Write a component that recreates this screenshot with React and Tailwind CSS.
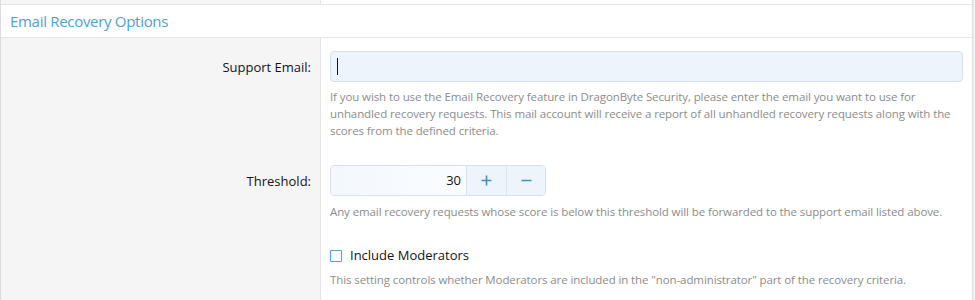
import React from 'react';

function Row({ label, labelClass = '', children }) {
  return (
    <div className="flex">
      <div className={`w-[320px] shrink-0 bg-[#f5f5f5] border-r border-[#e5e5e5] pr-[9px] text-right text-[13px] text-[#141414] ${labelClass}`}>
        {label}
      </div>
      <div className="flex-1 bg-white pl-[9px] pr-[9px]">{children}</div>
    </div>
  );
}

const help = 'text-[11.5px] leading-[17px] text-[#8c8c8c] tracking-[-0.1px]';

export default function App() {
  return (
    <div className="w-[975px] h-[300px] overflow-hidden bg-[#f0f0f0]" style={{ fontFamily: '"Open Sans", "Noto Sans", sans-serif' }}>
      <div className="w-[973px] h-full border-l border-r border-[#dcdcdc] bg-white">
        {/* previous row tail */}
        <div className="flex h-[5px] border-b border-[#e5e5e5]">
          <div className="w-[320px] bg-[#f5f5f5] border-r border-[#e5e5e5]" />
          <div className="flex-1 bg-white" />
        </div>

        {/* Section header */}
        <div className="h-[33px] flex items-center px-[9px] border-b border-[#e5e5e5] bg-white">
          <h3 className="text-[15px] text-[#4ca0d8] leading-none tracking-[-0.3px]">Email Recovery Options</h3>
        </div>

        {/* Support Email */}
        <Row label="Support Email:" labelClass="pt-[20px]">
          <div className="pt-[13px] pb-[26px]">
            <div className="h-[31px] rounded-[4px] border border-[#d8e1ea] bg-[#edf4fc] flex items-center pl-[6px]">
              <span className="w-px h-[17px] bg-[#141414]" />
            </div>
            <p className={`mt-[6px] ${help}`}>
              If you wish to use the Email Recovery feature in DragonByte Security, please enter the email you want to use for
              unhandled recovery requests. This mail account will receive a report of all unhandled recovery requests along with the
              scores from the defined criteria.
            </p>
          </div>
        </Row>

        {/* Threshold */}
        <Row label="Threshold:" labelClass="pt-[7px]">
          <div className="pb-[12px]">
            <div className="flex w-[216px] h-[31px] rounded-[4px] border border-[#d8e1ea] overflow-hidden">
              <div className="w-[135px] bg-gradient-to-r from-[#f3f8fd] to-[#fafcff] text-right pr-[5px] text-[13px] leading-[29px] text-[#141414]">30</div>
              <div className="w-[40px] border-l border-[#d8e1ea] bg-[#edf4fc] flex items-center justify-center">
                <svg width="11" height="11" viewBox="0 0 11 11"><path d="M5.5 0.5v10M0.5 5.5h10" stroke="#3d8fd1" strokeWidth="1.6" /></svg>
              </div>
              <div className="flex-1 border-l border-[#dde6ef] bg-[#edf4fc] flex items-center justify-center">
                <svg width="11" height="11" viewBox="0 0 11 11"><path d="M0.5 5.5h10" stroke="#3d8fd1" strokeWidth="1.6" /></svg>
              </div>
            </div>
            <p className={`mt-[7px] ${help}`}>
              Any email recovery requests whose score is below this threshold will be forwarded to the support email listed above.
            </p>
          </div>
        </Row>

        {/* Include Moderators */}
        <Row label="">
          <div className="pt-[15px] pb-[20px]">
            <label className="flex items-center gap-[8px] text-[13px] text-[#141414] leading-[17px]">
              <span className="w-[12px] h-[12px] border border-[#4ca0d8] rounded-[1px] bg-white" />
              Include Moderators
            </label>
            <p className={`mt-[7px] ${help}`}>
              This setting controls whether Moderators are included in the "non-administrator" part of the recovery criteria.
            </p>
          </div>
        </Row>
      </div>
    </div>
  );
}
